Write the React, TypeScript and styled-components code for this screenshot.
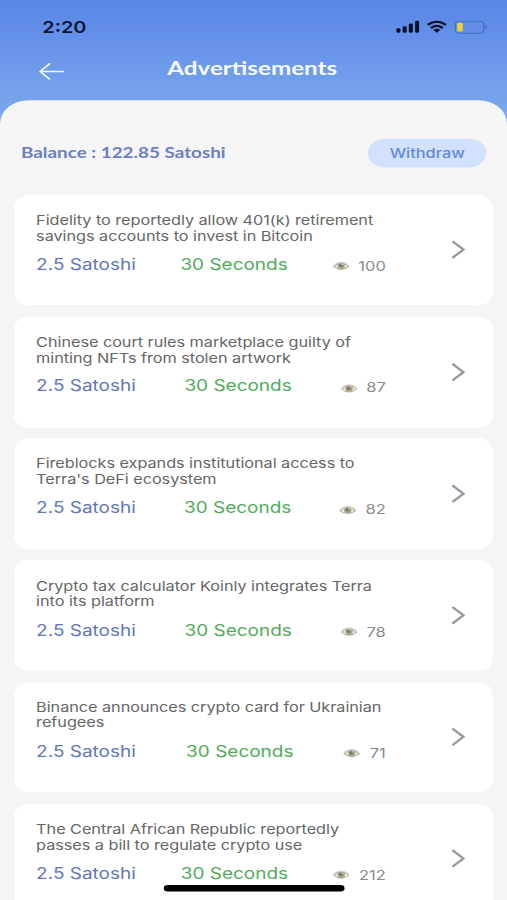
import React from "react";
import styled, { createGlobalStyle } from "styled-components";

const GlobalStyle = createGlobalStyle`
  * { box-sizing: border-box; }
  html, body { margin: 0; padding: 0; overflow: hidden; background: #f5f5f6; }
`;

const Viewport = styled.div`
  width: 507px;
  height: 900px;
  overflow: hidden;
`;

/* 390x844pt phone screen stretched to fill the viewport */
const Screen = styled.div`
  position: relative;
  width: 390px;
  height: 844px;
  overflow: hidden;
  display: flex;
  flex-direction: column;
  transform: scale(1.3, 1.06635);
  transform-origin: 0 0;
  font-family: Inter, "Liberation Sans", sans-serif;
  background: linear-gradient(#5985e6 0, #6996ea 50px, #7ba9eb 110px);
`;

const StatusBar = styled.div`
  height: 44px;
  padding: 6px 15.5px 0 32.5px;
  display: flex;
  align-items: center;
  justify-content: space-between;
`;

const Time = styled.span`
  padding-top: 1px;
  font-size: 15.3px;
  font-weight: 600;
  line-height: 20px;
  color: #0c1733;
`;

const StatusIcons = styled.div`
  display: flex;
  align-items: center;
  gap: 5px;
  svg { display: block; }
`;

const TitleBar = styled.header`
  height: 50.3px;
  padding: 0 30px;
  display: grid;
  grid-template-columns: 20px 1fr 20px;
  align-items: start;
`;

const BackButton = styled.button`
  margin: 15.2px 0 0;
  padding: 0;
  border: 0;
  background: none;
  line-height: 0;
`;

const Title = styled.h1`
  margin: 7.4px 0 0 -2px;
  text-align: center;
  font: 700 18.6px/24px Lato, sans-serif;
  color: #f5faff;
`;

const Sheet = styled.main`
  flex: 1;
  min-height: 0;
  padding: 36px 10.6px 0 11.2px;
  border-radius: 22px 22px 0 0;
  background: #f5f5f6;
`;

const BalanceRow = styled.div`
  height: 26.3px;
  margin-bottom: 26.2px;
  padding: 0 5px;
  display: flex;
  align-items: center;
  justify-content: space-between;
`;

const Balance = styled.span`
  font: 700 14.5px/20px Lato, sans-serif;
  color: #6c80c0;
`;

const Withdraw = styled.button`
  width: 91.5px;
  height: 26.3px;
  padding: 0;
  border: 0;
  border-radius: 14px;
  background: #d1e1fe;
  color: #6489d9;
  font: 500 12.6px/25px Inter, sans-serif;
`;

const List = styled.div`
  display: flex;
  flex-direction: column;
  gap: 10.6px;
`;

const Card = styled.article`
  flex: none;
  height: 103.6px;
  padding: 17.2px 21px 0 16.6px;
  border-radius: 11px;
  background: #fff;
  display: flex;
  justify-content: space-between;
`;

const CardBody = styled.div`
  width: 269px;
`;

const Headline = styled.p`
  margin: 0;
  font-size: 12.5px;
  letter-spacing: -0.03px;
  line-height: 14.6px;
  white-space: pre;
  color: #666;
`;

const Meta = styled.div`
  margin-top: 8.8px;
  height: 20px;
  display: flex;
  justify-content: space-between;
  align-items: center;
`;

const Amount = styled.span<{ $color: string }>`
  font-size: 14.6px;
  line-height: 20px;
  color: ${(p) => p.$color};
`;

const Views = styled.span`
  margin-top: 4px;
  display: flex;
  align-items: center;
  gap: 7px;
  font-size: 12.7px;
  line-height: 18px;
  color: #8b8b8b;
`;

const Chevron = styled.svg`
  display: block;
  margin-top: 25.4px;
`;

const HomeIndicator = styled.div`
  position: absolute;
  left: 126px;
  bottom: 8.4px;
  width: 139px;
  height: 5.4px;
  border-radius: 3px;
  background: #000;
`;

const Eye = () => (
  <svg width="13" height="11" viewBox="0 0 13 11">
    <path d="M.6 5.8Q6.2-.2 12.4 5.8 6.4 11.5.6 5.8Z" fill="#f1f0ec" stroke="#b1aea9" strokeWidth=".9" />
    <path d="M1 4.2Q6.3-.6 12 4" fill="none" stroke="#c9c6c1" strokeWidth=".7" />
    <circle cx="6.5" cy="5.5" r="2.9" fill="#aea784" />
    <circle cx="6.3" cy="5" r="1.5" fill="#77766a" />
    <circle cx="7.3" cy="4" r=".6" fill="#eee" />
  </svg>
);

const ads = [
  { text: "Fidelity to reportedly allow 401(k) retirement\nsavings accounts to invest in Bitcoin", views: 100 },
  { text: "Chinese court rules marketplace guilty of\nminting NFTs from stolen artwork", views: 87 },
  { text: "Fireblocks expands institutional access to\nTerra's DeFi ecosystem", views: 82 },
  { text: "Crypto tax calculator Koinly integrates Terra\ninto its platform", views: 78 },
  { text: "Binance announces crypto card for Ukrainian\nrefugees", views: 71 },
  { text: "The Central African Republic reportedly\npasses a bill to regulate crypto use", views: 212 },
];

export default function App() {
  return (
    <Viewport>
      <GlobalStyle />
      <Screen>
        <StatusBar>
          <Time>2:20</Time>
          <StatusIcons>
            <svg width="18.5" height="12" viewBox="0 0 18.5 12" fill="#071229">
              <rect x="0.9" y="7.6" width="3.1" height="4" rx="1" />
              <rect x="5.7" y="5.6" width="3.1" height="6" rx="1" />
              <rect x="10.5" y="3" width="3.1" height="8.6" rx="1" />
              <rect x="15.3" y=".4" width="3.1" height="11.2" rx="1" />
            </svg>
            <svg width="16" height="12" viewBox="0 0 16 12" fill="none" stroke="#071229" strokeWidth="2.1">
              <path d="M1 4.4Q8-1.7 15 4.4M3.5 7.3Q8 3.3 12.5 7.3" />
              <path d="M5.3 9.1Q8 6.9 10.7 9.1L8 11.8Z" fill="#071229" stroke="none" />
            </svg>
            <svg width="26" height="13" viewBox="0 0 26 13">
              <rect x="1.2" y=".9" width="22" height="11.2" rx="3.2" fill="none" stroke="#4371b7" strokeWidth="1" />
              <rect x="2.7" y="2.4" width="4.2" height="8.2" rx="1.3" fill="#edd22e" />
              <path d="M24.2 4.6Q25.6 5.2 25.6 6.5T24.2 8.4Z" fill="#4371b7" />
            </svg>
          </StatusIcons>
        </StatusBar>
        <TitleBar>
          <BackButton aria-label="Back">
            <svg width="20" height="16" viewBox="0 0 20 16" fill="none" stroke="#f2f7ff" strokeWidth="1.5" strokeLinecap="round" strokeLinejoin="round">
              <path d="M8 .9.9 8 8 15.1M1 8H18.5" />
            </svg>
          </BackButton>
          <Title>Advertisements</Title>
        </TitleBar>
        <Sheet>
          <BalanceRow>
            <Balance>Balance : 122.85 Satoshi</Balance>
            <Withdraw>Withdraw</Withdraw>
          </BalanceRow>
          <List>
            {ads.map((ad) => (
              <Card key={ad.text}>
                <CardBody>
                  <Headline>{ad.text}</Headline>
                  <Meta>
                    <Amount $color="#5f77bb">2.5 Satoshi</Amount>
                    <Amount $color="#50ab59">30 Seconds</Amount>
                    <Views>
                      <Eye />
                      {ad.views}
                    </Views>
                  </Meta>
                </CardBody>
                <Chevron width="11" height="18" viewBox="0 0 11 18" fill="none" stroke="#9598a1" strokeWidth="2">
                  <path d="M1 1.2 9.5 9 1 16.8" />
                </Chevron>
              </Card>
            ))}
          </List>
        </Sheet>
        <HomeIndicator />
      </Screen>
    </Viewport>
  );
}
